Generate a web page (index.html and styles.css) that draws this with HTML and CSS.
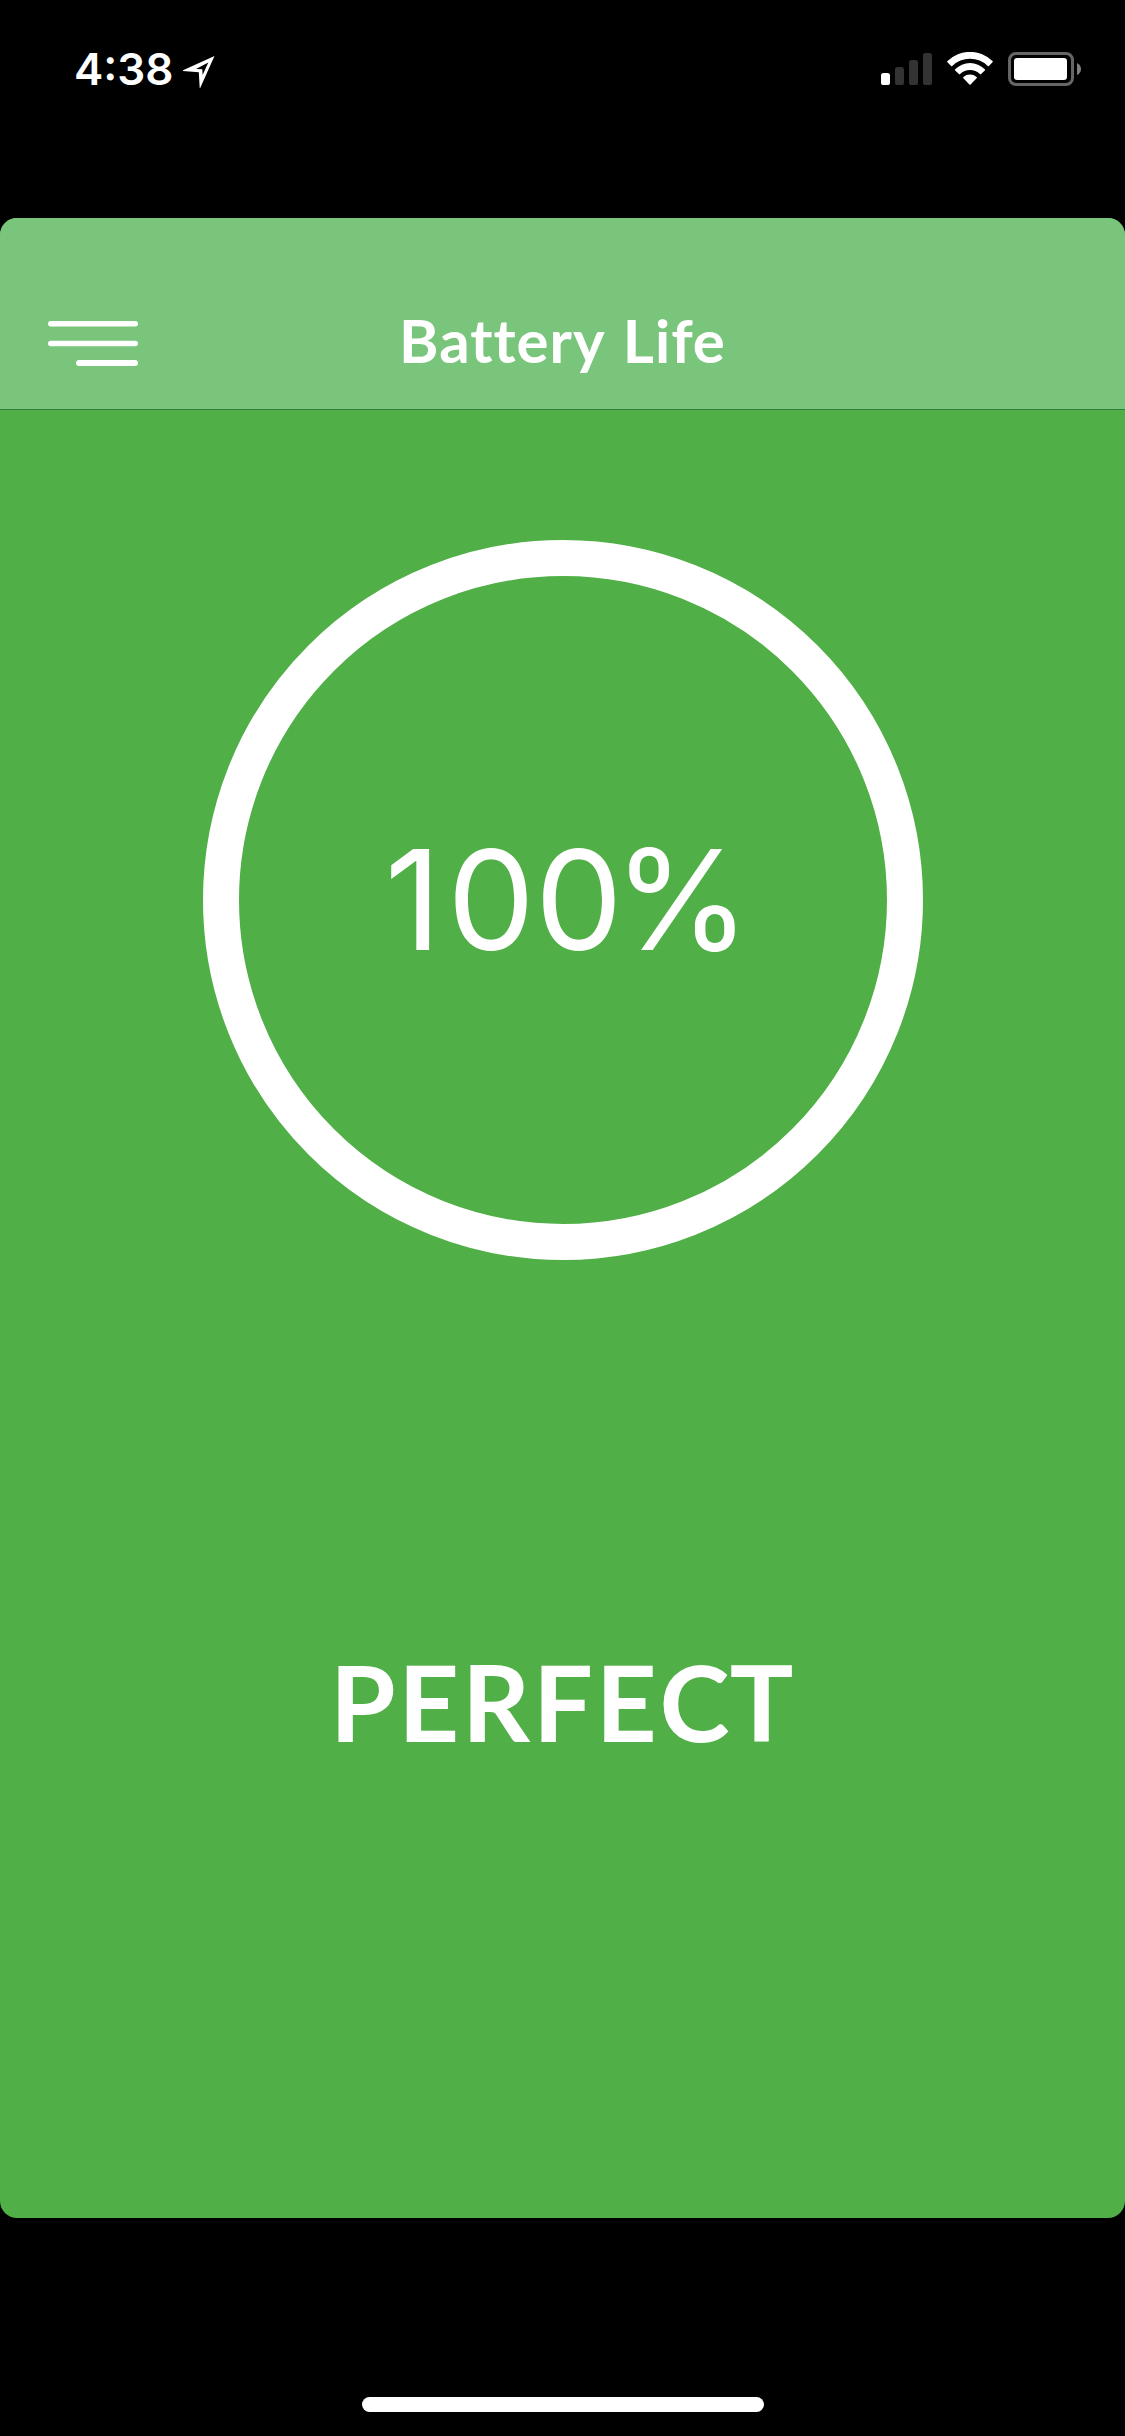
FILE: index.html
```html
<!DOCTYPE html>
<html lang="en">
<head>
<meta charset="utf-8">
<title>Battery Life</title>
<link rel="stylesheet" href="styles.css">
</head>
<body>
<div class="status-bar">
  <div class="clock">
    <span class="time">4:38</span>
    <svg class="location" width="32" height="33" viewBox="0 0 32 33"><path fill="#fff" fill-rule="evenodd" d="M31.5 0 17.2 32H16.7L15.800 16.300 0 15V14.200ZM25.300 6.500 13 12.900 19.300 13.200 19.600 19Z"/></svg>
  </div>
  <div class="indicators">
    <svg width="51" height="32" viewBox="0 0 51 32"><rect y="20" width="9" height="12" rx="2.6" fill="#fff"/><g fill="#333"><rect x="14" y="14" width="9" height="18" rx="2.6"/><rect x="28" y="7" width="9" height="25" rx="2.6"/><rect x="42" width="9" height="32" rx="2.6"/></g></svg>
    <svg width="46" height="33" viewBox="0 0 46 33"><path fill="#fff" d="M0.5 9.1a32 32 0 0 1 45 0q.6.6 0 1.2l-3.6 3.6q-.6.6-1.2 0a25.500 25.500 0 0 0-35.400 0q-.6.6-1.200 0L.5 10.300q-.6-.6 0-1.200ZM8.200 17.200a21 21 0 0 1 29.600 0q.6.600 0 1.200l-3.700 3.700q-.6.600-1.200 0a14.300 14.300 0 0 0-19.800 0q-.6.600-1.200 0l-3.700-3.700q-.6-.6 0-1.200ZM16.400 25.100a10 10 0 0 1 13.200 0q.6.600 0 1.200l-6 6.200q-.6.600-1.200 0l-6-6.200q-.6-.6 0-1.200Z"/></svg>
    <svg width="74" height="34" viewBox="0 0 74 34"><rect x="1.500" y="1.500" width="63" height="31" rx="6.500" fill="none" stroke="#666" stroke-width="3"/><rect x="6" y="6" width="53" height="22" rx="3.200" fill="#fff"/><path d="M69 11q4 2 4 6t-4 6Z" fill="#808080"/></svg>
  </div>
</div>
<main class="screen">
  <header class="nav-bar">
    <svg class="menu" width="90" height="45" viewBox="0 0 90 45"><g fill="#fff"><rect width="90" height="5.500" rx="2.750"/><rect y="19.700" width="90" height="5.500" rx="2.750"/><rect x="28" y="39" width="62" height="6" rx="3"/></g></svg>
    <h1 class="title">Battery Life</h1>
  </header>
  <section class="content">
    <div class="ring"><div class="percent"><span class="lead">1</span>0<span class="tight">0</span>%</div></div>
    <div class="condition">PERFE<span class="overlap">C</span>T</div>
  </section>
</main>
<footer class="home-area"><div class="home-indicator"></div></footer>
</body>
</html>
```
FILE: styles.css
```css
* { box-sizing: border-box; }
body {
  margin: 0;
  width: 1125px;
  height: 2436px;
  display: flex;
  flex-direction: column;
  background: #000;
  color: #fff;
  font-family: Lato, sans-serif;
}
svg { display: block; flex: none; }
.status-bar {
  height: 218px;
  padding: 52px 43px 0 74px;
  display: flex;
  justify-content: space-between;
  align-items: flex-start;
}
.clock { display: flex; gap: 10px; }
.time {
  width: 99px;
  font: 600 44px/34px Inter, sans-serif;
  white-space: nowrap;
}
.location { margin-top: 4px; }
.indicators { display: flex; gap: 15px; }
.indicators svg:first-child { margin-top: 1px; }
.screen {
  height: 2000px;
  border-radius: 17px;
  overflow: hidden;
  background: #50af47;
}
.nav-bar {
  height: 192px;
  padding: 58px 48px 0;
  display: grid;
  grid-template-columns: 90px 1fr 90px;
  align-items: center;
  background: #7ac57c;
  border-bottom: 1px solid #2f8038;
}
.menu { margin-top: 1px; }
.title {
  margin: 0 0 6px;
  text-align: center;
  font-size: 60px;
  line-height: 72px;
  font-weight: 700;
  letter-spacing: 1px;
  word-spacing: 3px;
  font-variant-ligatures: none;
  white-space: nowrap;
}
.content {
  padding-top: 130px;
  display: flex;
  flex-direction: column;
  align-items: center;
}
.ring {
  width: 720px;
  height: 720px;
  border: 36px solid #fff;
  border-radius: 50%;
  display: flex;
  align-items: center;
  justify-content: center;
}
.percent {
  padding-left: 10px;
  font: 400 139px/160px Inter, sans-serif;
  white-space: nowrap;
}
.lead { letter-spacing: 6px; }
.tight { letter-spacing: -9px; }
.condition {
  margin-top: 377px;
  padding-left: 1px;
  font-size: 106px;
  line-height: 128px;
  font-weight: 700;
  letter-spacing: 2.8px;
  white-space: nowrap;
}
.overlap { letter-spacing: 0; }
.home-area {
  height: 218px;
  display: flex;
  justify-content: center;
  align-items: flex-end;
  padding-bottom: 24px;
}
.home-indicator { width: 402px; height: 15px; border-radius: 8px; background: #fff; }
```
